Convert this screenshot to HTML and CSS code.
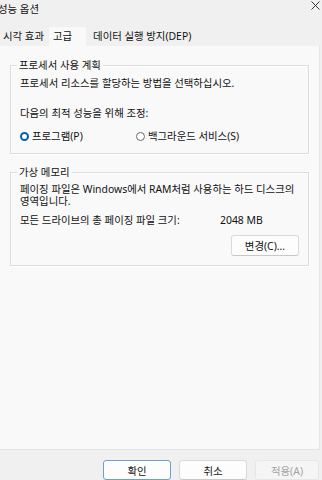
FILE: index.html
```html
<!DOCTYPE html>
<html lang="ko">
<head>
<meta charset="utf-8">
<link rel="stylesheet" href="styles.css">
</head>
<body>
<div class="window">
  <div class="titlebar">
    <span class="title">성능 옵션</span>
    <svg class="close" width="9" height="9" viewBox="0 0 9 9"><path d="M0.5 0.5 L8.5 8.5 M8.5 0.5 L0.5 8.5" stroke="#333" stroke-width="1" fill="none"/></svg>
  </div>
  <div class="tabs">
    <span class="tab">시각 효과</span>
    <span class="tab active">고급</span>
    <span class="tab">데이터 실행 방지(DEP)</span>
  </div>
  <div class="panel">
    <div class="group g1">
      <div class="group-title">프로세서 사용 계획</div>
      <div class="line l1">프로세서 리소스를 할당하는 방법을 선택하십시오.</div>
      <div class="line l2">다음의 최적 성능을 위해 조정:</div>
      <div class="radios">
        <span class="radio-item first"><span class="radio checked"></span>프로그램(P)</span>
        <span class="radio-item"><span class="radio"></span>백그라운드 서비스(S)</span>
      </div>
    </div>
    <div class="group g2">
      <div class="group-title">가상 메모리</div>
      <div class="para">페이징 파일은 Windows에서 RAM처럼 사용하는 하드 디스크의<br>영역입니다.</div>
      <div class="size-row"><span class="size-label">모든 드라이브의 총 페이징 파일 크기:</span><span>2048 MB</span></div>
      <div class="btn-row"><button class="btn">변경(C)...</button></div>
    </div>
  </div>
  <div class="footer">
    <button class="btn primary">확인</button>
    <button class="btn">취소</button>
    <button class="btn disabled">적용(A)</button>
  </div>
</div>
</body>
</html>
```
FILE: styles.css
```css
* { box-sizing: border-box; }
html, body { margin: 0; padding: 0; }
body {
  background: #f0f0f0;
  font-family: "Noto Sans", "Noto Sans CJK KR", sans-serif;
  font-size: 10.4px;
  color: #111;
  width: 322px;
  height: 480px;
  overflow: hidden;
}
.window { display: flex; flex-direction: column; height: 480px; }
.titlebar {
  height: 20px;
  display: flex;
  align-items: center;
  justify-content: space-between;
  padding: 0 2px 0 0;
  margin-left: -2px;
  flex: none;
}
.title { font-size: 10.4px; line-height: 12px; margin-top: -3px; }
.close { margin-top: -9px; }
.tabs {
  display: flex;
  height: 26px;
  padding-top: 7px;
  align-items: stretch;
  flex: none;
}
.tab { padding: 0 3px 0 3px; line-height: 19px; }
.tab.active { background: #f9f9f9; padding: 0 14px 0 4px; margin-left: 2px; margin-right: 4px; }
.panel {
  background: #f9f9f9;
  width: 320px;
  height: 404px;
  border-right: 1px solid #e6e6e6;
  border-bottom: 1px solid #e3e3e3;
  padding-top: 19px;
  flex: none;
}
.group {
  margin: 0 10px;
  border: 1px solid #dcdcdc;
  box-shadow: inset 1px 1px 0 #fff, 1px 1px 0 #fff;
  padding: 0 9px 11px 9px;
  line-height: 12px;
}
.group-title {
  width: fit-content;
  margin: -7px 0 0 -3px;
  padding: 0 2px;
  background: #f9f9f9;
  line-height: 12px;
}
.l1 { margin-top: 6px; }
.l2 { margin-top: 18px; }
.radios { display: flex; margin-top: 11px; align-items: center; }
.radio-item { display: flex; align-items: center; }
.radio-item.first { width: 116px; }
.radio {
  width: 9px; height: 9px; border-radius: 50%;
  border: 1px solid #6b6b6b;
  background: #fff;
  margin-right: 3px;
}
.radio.checked { border: 2.5px solid #0063b1; background: #fff; }
.g2 { margin-top: 18px; padding-bottom: 9px; }
.para { margin-top: 6px; line-height: 11.5px; }
.size-row { display: flex; margin-top: 7px; }
.size-label { width: 200px; }
.btn-row { display: flex; justify-content: flex-end; margin-top: 9px; }
.btn {
  font-family: inherit;
  font-size: 10.4px;
  color: #111;
  width: 68px;
  height: 21px;
  background: #fdfdfd;
  border: 1px solid #dadada;
  border-bottom-color: #c8c8c8;
  border-radius: 3px;
  padding: 0;
}
.footer {
  display: flex;
  justify-content: flex-end;
  gap: 8px;
  padding: 10px 3px 0 0;
}
.footer .btn { height: 20px; }
.btn.primary { border: 1px solid #6f9fd1; }
.btn.disabled { width: 64px; background: #f5f5f5; border-color: #e6e6e6; color: #a3a3a3; }
```
